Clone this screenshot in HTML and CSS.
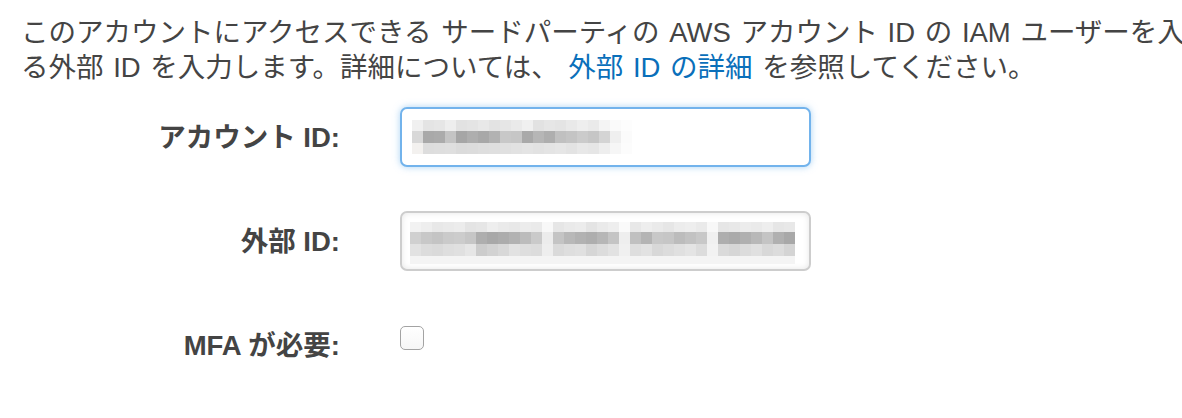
FILE: index.html
```html
<!DOCTYPE html>
<html lang="ja">
<head>
<meta charset="utf-8">
<link rel="stylesheet" href="styles.css">
</head>
<body>
<div class="page">
  <p class="intro">このアカウントにアクセスできる サードパーティの AWS アカウント ID の IAM ユーザーを入<br>る外部 ID を入力します。詳細については、 <a class="link" href="#">外部 ID の詳細</a> を参照してください。</p>
  <div class="form">
    <label class="label">アカウント ID:</label>
    <div class="field field-focus">
      <svg class="blur" width="222" height="34" viewBox="0 0 222 34" shape-rendering="crispEdges">
        <g>
          <rect x="0" y="0" width="11" height="11" fill="#f0f0f0"/><rect x="11" y="0" width="11" height="11" fill="#e4e4e4"/><rect x="22" y="0" width="11" height="11" fill="#e6e6e6"/><rect x="33" y="0" width="11" height="11" fill="#eeeeee"/><rect x="44" y="0" width="11" height="11" fill="#e2e2e2"/><rect x="55" y="0" width="11" height="11" fill="#e4e4e4"/><rect x="66" y="0" width="11" height="11" fill="#e8e8e8"/><rect x="77" y="0" width="11" height="11" fill="#e3e3e3"/><rect x="88" y="0" width="11" height="11" fill="#e6e6e6"/><rect x="99" y="0" width="11" height="11" fill="#eaeaea"/><rect x="110" y="0" width="11" height="11" fill="#f0f0f0"/><rect x="121" y="0" width="11" height="11" fill="#e2e2e2"/><rect x="132" y="0" width="11" height="11" fill="#e6e6e6"/><rect x="143" y="0" width="11" height="11" fill="#e4e4e4"/><rect x="154" y="0" width="11" height="11" fill="#e9e9e9"/><rect x="165" y="0" width="11" height="11" fill="#eeeeee"/><rect x="176" y="0" width="11" height="11" fill="#eaeaea"/><rect x="187" y="0" width="11" height="11" fill="#f4f4f4"/><rect x="198" y="0" width="11" height="11" fill="#fafafa"/><rect x="209" y="0" width="11" height="11" fill="#fdfdfd"/>
        </g>
        <g>
          <rect x="0" y="11" width="11" height="12" fill="#d8d8d8"/><rect x="11" y="11" width="11" height="12" fill="#a9a9a9"/><rect x="22" y="11" width="11" height="12" fill="#ababab"/><rect x="33" y="11" width="11" height="12" fill="#c4c4c4"/><rect x="44" y="11" width="11" height="12" fill="#a6a6a6"/><rect x="55" y="11" width="11" height="12" fill="#aeaeae"/><rect x="66" y="11" width="11" height="12" fill="#a8a8a8"/><rect x="77" y="11" width="11" height="12" fill="#b2b2b2"/><rect x="88" y="11" width="11" height="12" fill="#c8c8c8"/><rect x="99" y="11" width="11" height="12" fill="#c6c6c6"/><rect x="110" y="11" width="11" height="12" fill="#a9a9a9"/><rect x="121" y="11" width="11" height="12" fill="#b6b6b6"/><rect x="132" y="11" width="11" height="12" fill="#aeaeae"/><rect x="143" y="11" width="11" height="12" fill="#c0c0c0"/><rect x="154" y="11" width="11" height="12" fill="#c4c4c4"/><rect x="165" y="11" width="11" height="12" fill="#cbcbcb"/><rect x="176" y="11" width="11" height="12" fill="#c6c6c6"/><rect x="187" y="11" width="11" height="12" fill="#d4d4d4"/><rect x="198" y="11" width="11" height="12" fill="#efefef"/><rect x="209" y="11" width="11" height="12" fill="#fbfbfb"/>
        </g>
        <g>
          <rect x="0" y="23" width="11" height="11" fill="#f3f1ef"/><rect x="11" y="23" width="11" height="11" fill="#dddddd"/><rect x="22" y="23" width="11" height="11" fill="#dedede"/><rect x="33" y="23" width="11" height="11" fill="#dfdfdf"/><rect x="44" y="23" width="11" height="11" fill="#dbdbdb"/><rect x="55" y="23" width="11" height="11" fill="#dcdcdc"/><rect x="66" y="23" width="11" height="11" fill="#dedede"/><rect x="77" y="23" width="11" height="11" fill="#dfdfdf"/><rect x="88" y="23" width="11" height="11" fill="#e0e0e0"/><rect x="99" y="23" width="11" height="11" fill="#e2e2e2"/><rect x="110" y="23" width="11" height="11" fill="#e4e4e4"/><rect x="121" y="23" width="11" height="11" fill="#e2e2e2"/><rect x="132" y="23" width="11" height="11" fill="#e4e4e4"/><rect x="143" y="23" width="11" height="11" fill="#e6e6e6"/><rect x="154" y="23" width="11" height="11" fill="#e3e3e3"/><rect x="165" y="23" width="11" height="11" fill="#e8e8e8"/><rect x="176" y="23" width="11" height="11" fill="#e6e6e6"/><rect x="187" y="23" width="11" height="11" fill="#eeeeee"/><rect x="198" y="23" width="11" height="11" fill="#f6f6f6"/><rect x="209" y="23" width="11" height="11" fill="#fcfcfc"/>
        </g>
      </svg>
    </div>

    <label class="label">外部 ID:</label>
    <div class="field field-plain">
      <svg class="blur" width="385" height="42" viewBox="0 0 385 42" shape-rendering="crispEdges">
        <g>
          <rect x="0" y="0" width="11" height="10" fill="#f2f2f2"/><rect x="11" y="0" width="11" height="10" fill="#eeeeee"/><rect x="22" y="0" width="11" height="10" fill="#e8e8e8"/><rect x="33" y="0" width="11" height="10" fill="#eaeaea"/><rect x="44" y="0" width="11" height="10" fill="#ececec"/><rect x="55" y="0" width="11" height="10" fill="#e4e4e4"/><rect x="66" y="0" width="11" height="10" fill="#e6e6e6"/><rect x="77" y="0" width="11" height="10" fill="#eeeeee"/><rect x="88" y="0" width="11" height="10" fill="#eaeaea"/><rect x="99" y="0" width="11" height="10" fill="#e8e8e8"/><rect x="110" y="0" width="11" height="10" fill="#ececec"/><rect x="121" y="0" width="11" height="10" fill="#eaeaea"/><rect x="132" y="0" width="11" height="10" fill="#f8f8f8"/><rect x="143" y="0" width="11" height="10" fill="#e6e6e6"/><rect x="154" y="0" width="11" height="10" fill="#eaeaea"/><rect x="165" y="0" width="11" height="10" fill="#ececec"/><rect x="176" y="0" width="11" height="10" fill="#e4e4e4"/><rect x="187" y="0" width="11" height="10" fill="#eaeaea"/><rect x="198" y="0" width="11" height="10" fill="#eeeeee"/><rect x="209" y="0" width="11" height="10" fill="#fafafa"/><rect x="220" y="0" width="11" height="10" fill="#e8e8e8"/><rect x="231" y="0" width="11" height="10" fill="#eeeeee"/><rect x="242" y="0" width="11" height="10" fill="#eaeaea"/><rect x="253" y="0" width="11" height="10" fill="#e6e6e6"/><rect x="264" y="0" width="11" height="10" fill="#ececec"/><rect x="275" y="0" width="11" height="10" fill="#eeeeee"/><rect x="286" y="0" width="11" height="10" fill="#eaeaea"/><rect x="297" y="0" width="11" height="10" fill="#f8f8f8"/><rect x="308" y="0" width="11" height="10" fill="#e6e6e6"/><rect x="319" y="0" width="11" height="10" fill="#e8e8e8"/><rect x="330" y="0" width="11" height="10" fill="#ececec"/><rect x="341" y="0" width="11" height="10" fill="#eaeaea"/><rect x="352" y="0" width="11" height="10" fill="#eeeeee"/><rect x="363" y="0" width="11" height="10" fill="#e6e6e6"/><rect x="374" y="0" width="11" height="10" fill="#e8e8e8"/>
        </g>
        <g>
          <rect x="0" y="10" width="11" height="12" fill="#d0d0d0"/><rect x="11" y="10" width="11" height="12" fill="#c8c8c8"/><rect x="22" y="10" width="11" height="12" fill="#c4c4c4"/><rect x="33" y="10" width="11" height="12" fill="#cacaca"/><rect x="44" y="10" width="11" height="12" fill="#cccccc"/><rect x="55" y="10" width="11" height="12" fill="#c6c6c6"/><rect x="66" y="10" width="11" height="12" fill="#aeaeae"/><rect x="77" y="10" width="11" height="12" fill="#a8a8a8"/><rect x="88" y="10" width="11" height="12" fill="#acacac"/><rect x="99" y="10" width="11" height="12" fill="#b2b2b2"/><rect x="110" y="10" width="11" height="12" fill="#bcbcbc"/><rect x="121" y="10" width="11" height="12" fill="#cacaca"/><rect x="132" y="10" width="11" height="12" fill="#ececec"/><rect x="143" y="10" width="11" height="12" fill="#c4c4c4"/><rect x="154" y="10" width="11" height="12" fill="#b8b8b8"/><rect x="165" y="10" width="11" height="12" fill="#b2b2b2"/><rect x="176" y="10" width="11" height="12" fill="#aeaeae"/><rect x="187" y="10" width="11" height="12" fill="#b6b6b6"/><rect x="198" y="10" width="11" height="12" fill="#c4c4c4"/><rect x="209" y="10" width="11" height="12" fill="#eeeeee"/><rect x="220" y="10" width="11" height="12" fill="#c0c0c0"/><rect x="231" y="10" width="11" height="12" fill="#b4b4b4"/><rect x="242" y="10" width="11" height="12" fill="#c8c8c8"/><rect x="253" y="10" width="11" height="12" fill="#c6c6c6"/><rect x="264" y="10" width="11" height="12" fill="#bcbcbc"/><rect x="275" y="10" width="11" height="12" fill="#c2c2c2"/><rect x="286" y="10" width="11" height="12" fill="#c8c8c8"/><rect x="297" y="10" width="11" height="12" fill="#f0f0f0"/><rect x="308" y="10" width="11" height="12" fill="#aeaeae"/><rect x="319" y="10" width="11" height="12" fill="#aaaaaa"/><rect x="330" y="10" width="11" height="12" fill="#b0b0b0"/><rect x="341" y="10" width="11" height="12" fill="#b8b8b8"/><rect x="352" y="10" width="11" height="12" fill="#c4c4c4"/><rect x="363" y="10" width="11" height="12" fill="#b0b0b0"/><rect x="374" y="10" width="11" height="12" fill="#a8a8a8"/>
        </g>
        <g>
          <rect x="0" y="22" width="11" height="12" fill="#e2e2e2"/><rect x="11" y="22" width="11" height="12" fill="#dcdcdc"/><rect x="22" y="22" width="11" height="12" fill="#dadada"/><rect x="33" y="22" width="11" height="12" fill="#dedede"/><rect x="44" y="22" width="11" height="12" fill="#e0e0e0"/><rect x="55" y="22" width="11" height="12" fill="#e6e6e6"/><rect x="66" y="22" width="11" height="12" fill="#cccccc"/><rect x="77" y="22" width="11" height="12" fill="#d2d2d2"/><rect x="88" y="22" width="11" height="12" fill="#d8d8d8"/><rect x="99" y="22" width="11" height="12" fill="#e2e2e2"/><rect x="110" y="22" width="11" height="12" fill="#dedede"/><rect x="121" y="22" width="11" height="12" fill="#dcdcdc"/><rect x="132" y="22" width="11" height="12" fill="#eeeeee"/><rect x="143" y="22" width="11" height="12" fill="#dadada"/><rect x="154" y="22" width="11" height="12" fill="#dedede"/><rect x="165" y="22" width="11" height="12" fill="#e0e0e0"/><rect x="176" y="22" width="11" height="12" fill="#d6d6d6"/><rect x="187" y="22" width="11" height="12" fill="#dcdcdc"/><rect x="198" y="22" width="11" height="12" fill="#e2e2e2"/><rect x="209" y="22" width="11" height="12" fill="#f0f0f0"/><rect x="220" y="22" width="11" height="12" fill="#dedede"/><rect x="231" y="22" width="11" height="12" fill="#e2e2e2"/><rect x="242" y="22" width="11" height="12" fill="#d8d8d8"/><rect x="253" y="22" width="11" height="12" fill="#dcdcdc"/><rect x="264" y="22" width="11" height="12" fill="#e0e0e0"/><rect x="275" y="22" width="11" height="12" fill="#e4e4e4"/><rect x="286" y="22" width="11" height="12" fill="#dcdcdc"/><rect x="297" y="22" width="11" height="12" fill="#f2f2f2"/><rect x="308" y="22" width="11" height="12" fill="#dadada"/><rect x="319" y="22" width="11" height="12" fill="#d6d6d6"/><rect x="330" y="22" width="11" height="12" fill="#dcdcdc"/><rect x="341" y="22" width="11" height="12" fill="#e0e0e0"/><rect x="352" y="22" width="11" height="12" fill="#d8d8d8"/><rect x="363" y="22" width="11" height="12" fill="#dcdcdc"/><rect x="374" y="22" width="11" height="12" fill="#d4d4d4"/>
        </g>
        <rect x="0" y="34" width="385" height="8" fill="#f4f4f4"/>
      </svg>
    </div>

    <label class="label label-mfa">MFA が必要:</label>
    <div class="check-cell"><input class="check" type="checkbox"></div>
  </div>
</div>
</body>
</html>
```

FILE: styles.css
```css
html, body {
  margin: 0;
  padding: 0;
  background: #ffffff;
  overflow: hidden;
}

.page {
  width: 1182px;
  height: 418px;
  overflow: hidden;
  font-family: "Liberation Sans", "Noto Sans CJK JP", sans-serif;
  font-size: 27.5px;
  color: #444444;
}

.intro {
  margin: 0;
  padding: 15px 0 0 21px;
  line-height: 35px;
  white-space: nowrap;
  word-spacing: 2px;
}

.link {
  color: #0a6fba;
  text-decoration: none;
}

.form {
  display: grid;
  grid-template-columns: 340px 411px;
  grid-auto-rows: 60px;
  column-gap: 60px;
  row-gap: 44px;
  margin-top: 22px;
  align-items: center;
}

.label {
  font-weight: bold;
  text-align: right;
  line-height: 35px;
}

.label-mfa {
  padding-top: 1px;
}

.field {
  box-sizing: border-box;
  height: 60px;
  border-radius: 7px;
  background: #ffffff;
  display: flex;
  align-items: center;
}

.field-focus {
  border: 2px solid #72b3ec;
  box-shadow: 0 0 7px rgba(102, 175, 233, 0.55);
  padding-left: 10px;
}

.field-plain {
  border: 2px solid #cdcdcd;
  box-shadow: inset 0 0 6px rgba(0, 0, 0, 0.10);
  padding-left: 8px;
  padding-top: 4px;
}

.blur {
  display: block;
}

.check-cell {
  align-self: start;
  padding-top: 11px;
}

.check {
  appearance: none;
  -webkit-appearance: none;
  display: block;
  margin: 0;
  width: 24px;
  height: 24px;
  box-sizing: border-box;
  border: 1.5px solid #a3a3a3;
  border-radius: 5px;
  background: linear-gradient(#ffffff, #f6f6f6);
}
```
